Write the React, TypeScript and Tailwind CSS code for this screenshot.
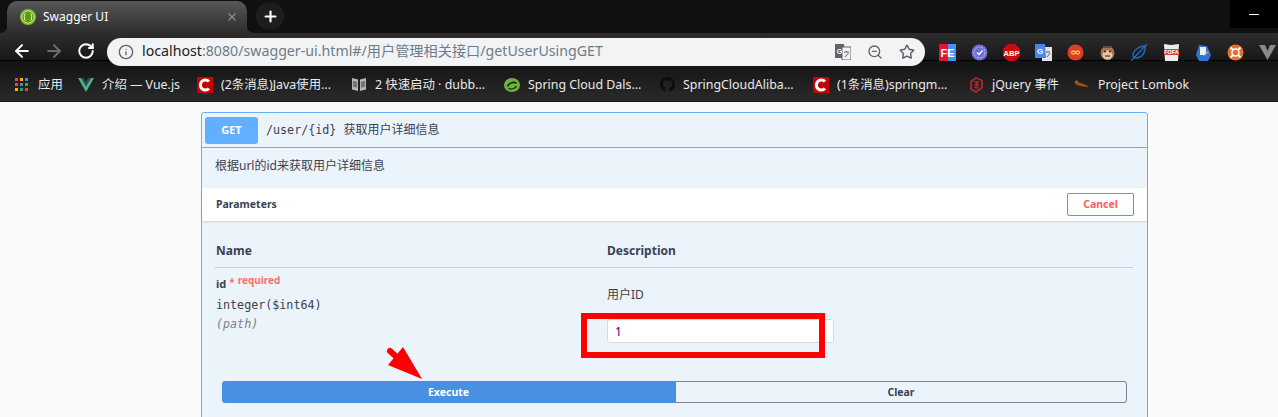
import React from 'react';
import { ArrowLeft, ArrowRight, RotateCw, Info, ZoomOut, Star, X, Plus } from 'lucide-react';

const CRed = () => (
  <span className="w-4 h-4 bg-[#c80000] flex items-center justify-center shrink-0">
    <svg width="14" height="14" viewBox="0 0 14 14"><path d="M11 3.600A5 5 0 1 0 11 10.400" fill="none" stroke="#fff" strokeWidth="3" /></svg>
  </span>
);

const AppsGrid = () => {
  const colors = ['#e8453c', '#f4b400', '#4285f4', '#e8453c', '#4285f4', '#34a853', '#f4b400', '#34a853', '#e8453c'];
  return (
    <span className="w-[15px] shrink-0">
      <span className="w-[13px] h-[13px] grid grid-cols-3 gap-[2px]">
        {colors.map((c, i) => <span key={i} className="w-[3px] h-[3px]" style={{ backgroundColor: c }} />)}
      </span>
    </span>
  );
};

const VueLogo = () => (
  <svg width="16" height="14" viewBox="0 0 16 14" className="shrink-0">
    <path d="M0 0h3.200L8 8.200 12.800 0H16L8 14z" fill="#41b883" />
    <path d="M3.200 0h2.600L8 3.800 10.200 0h2.600L8 8.200z" fill="#35495e" />
  </svg>
);

const BookIcon = () => (
  <svg width="16" height="15" viewBox="0 0 16 15" className="shrink-0">
    <path d="M1 1l6 1.500V14L1 12.500z" fill="#b5b5b5" />
    <path d="M15 1L9 2.500V14l6-1.500z" fill="#b5b5b5" />
    <path d="M3 4v6M5 4.500v6M11 4.500v6M13 4v6" stroke="#333" strokeWidth="1" />
  </svg>
);

const SpringIcon = () => (
  <svg width="16" height="14" viewBox="0 0 16 14" className="shrink-0">
    <ellipse cx="8" cy="7" rx="8" ry="7" fill="#6db33f" />
    <path d="M3.500 8.500C5 5 9 3.500 12.500 5" fill="none" stroke="#1d1d1d" strokeWidth="1.600" />
    <path d="M4.500 10.500c3 1 6 .5 8-2.500" fill="none" stroke="#1d1d1d" strokeWidth="1.200" />
  </svg>
);

const GithubIcon = () => (
  <svg width="15" height="15" viewBox="0 0 16 16" className="shrink-0">
    <path fill="#0c0c0c" d="M8 0C3.580 0 0 3.580 0 8c0 3.540 2.290 6.530 5.470 7.590.4.070.55-.17.55-.38 0-.19-.01-.82-.01-1.490-2.010.37-2.530-.49-2.690-.94-.09-.23-.48-.94-.82-1.130-.28-.15-.68-.52-.01-.53.63-.01 1.080.58 1.230.82.72 1.210 1.870.87 2.330.66.070-.52.28-.87.51-1.070-1.780-.2-3.640-.89-3.640-3.950 0-.87.310-1.590.820-2.150-.08-.2-.36-1.020.08-2.120 0 0 .67-.21 2.200.82a7.600 7.600 0 0 1 4 0c1.530-1.040 2.200-.82 2.200-.82.44 1.100.16 1.920.08 2.120.51.560.82 1.270.82 2.150 0 3.070-1.870 3.750-3.650 3.950.29.250.54.730.54 1.480 0 1.070-.01 1.930-.01 2.200 0 .21.150.46.550.38A8.010 8.010 0 0 0 16 8c0-4.420-3.580-8-8-8z" />
  </svg>
);

const JQueryIcon = () => (
  <svg width="16" height="16" viewBox="0 0 16 16" className="shrink-0">
    <path d="M8 1l6 2.500v7L8 15l-5-3V4.500L8 1z" fill="none" stroke="#b3262a" strokeWidth="1.800" />
    <path d="M6 5h4L7.500 8H10l-1 3-3-1" fill="none" stroke="#b3262a" strokeWidth="1.500" />
  </svg>
);

const ChiliIcon = () => (
  <svg width="16" height="10" viewBox="0 0 16 10" className="shrink-0">
    <path d="M1 2c1-1 2-1 3 0 3 1 7 2 11 5-4 0-9-1-12-2-1 0-2-1-2-3z" fill="#b4441c" />
    <path d="M0 2l3-2 1 2z" fill="#6a7d2a" />
  </svg>
);

const bookmarks: { icon: React.ReactNode; label: string; width: string }[] = [
  { icon: <AppsGrid />, label: '应用', width: 'w-[63px]' },
  { icon: <VueLogo />, label: '介绍 — Vue.js', width: 'w-[119px]' },
  { icon: <CRed />, label: '(2条消息)Java使用...', width: 'w-[154px]' },
  { icon: <BookIcon />, label: '2 快速启动 · dubb...', width: 'w-[153px]' },
  { icon: <SpringIcon />, label: 'Spring Cloud Dals...', width: 'w-[156px]' },
  { icon: <GithubIcon />, label: 'SpringCloudAliba...', width: 'w-[153px]' },
  { icon: <CRed />, label: '(1条消息)springm...', width: 'w-[155px]' },
  { icon: <JQueryIcon />, label: 'jQuery 事件', width: 'w-[106px]' },
  { icon: <ChiliIcon />, label: 'Project Lombok', width: 'w-[130px]' },
];

const extensions: React.ReactNode[] = [
  <svg key="fe" width="17" height="17" viewBox="0 0 17 17"><rect width="9" height="17" fill="#e8112d" /><rect x="9" width="8" height="17" fill="#4a90f0" /><text x="1.500" y="13" fontSize="11" fontWeight="700" fill="#fff" fontFamily="Liberation Sans">FE</text></svg>,
  <svg key="check" width="17" height="17" viewBox="0 0 17 17"><circle cx="8.500" cy="8.500" r="8" fill="#6a6fd0" /><circle cx="8.500" cy="8.500" r="5.500" fill="none" stroke="#c9cbf2" strokeDasharray="2 1" /><path d="M6 8.500l2 2 3.500-4" fill="none" stroke="#fff" strokeWidth="1.400" /></svg>,
  <svg key="abp" width="17" height="17" viewBox="0 0 17 17"><path d="M5 0h7l5 5v7l-5 5H5l-5-5V5z" fill="#c70d0d" /><text x="8.500" y="11.500" fontSize="7.500" fontWeight="700" textAnchor="middle" fill="#fff" fontFamily="Liberation Sans">ABP</text></svg>,
  <svg key="gt" width="17" height="17" viewBox="0 0 17 17"><rect x="7" y="3" width="10" height="14" fill="#e3e3e3" /><path d="M0 0h10l1 14H0z" fill="#4a86e8" /><text x="5" y="10" fontSize="8" fontWeight="700" textAnchor="middle" fill="#fff" fontFamily="Liberation Sans">G</text><path d="M11 8h4M13 7v1M12 13l3-4" stroke="#666" strokeWidth="1" fill="none" /></svg>,
  <svg key="inf" width="17" height="17" viewBox="0 0 17 17"><circle cx="8.500" cy="8.500" r="8" fill="#d9402c" /><path d="M8.500 8.500c-1-2-4-2-4 0s3 2 4 0 4-2 4 0-3 2-4 0z" fill="none" stroke="#f4c430" strokeWidth="1.300" /></svg>,
  <svg key="monkey" width="15" height="17" viewBox="0 0 15 17"><circle cx="7.500" cy="9" r="7" fill="#a9734f" /><ellipse cx="7.500" cy="11" rx="5" ry="4.500" fill="#e6c3a3" /><circle cx="5" cy="7.500" r="1" fill="#222" /><circle cx="10" cy="7.500" r="1" fill="#222" /><path d="M5 12h5" stroke="#222" /><path d="M3 2h9v2H3z" fill="#6b4a33" /></svg>,
  <svg key="leaf" width="17" height="17" viewBox="0 0 17 17" fill="none" stroke="#1c6cc4" strokeWidth="1.300"><path d="M2 12C2 6 8 2 14 2c1 6-3 12-9 12-1 0-2-1-3-2z" /><path d="M0 17L16 0" /></svg>,
  <svg key="cup" width="15" height="17" viewBox="0 0 15 17"><path d="M0 0l7 1 8-1-1 17H1z" fill="#ececec" /><rect x="0" y="5" width="15" height="6" fill="#d93a3a" /><text x="7.500" y="10" fontSize="5.500" fontWeight="700" textAnchor="middle" fill="#fff" fontFamily="Liberation Sans">FOFA</text></svg>,
  <svg key="doc" width="15" height="17" viewBox="0 0 15 17"><path d="M3 1l8 1 4 9-3 6H3L0 11z" fill="#2f74d0" /><path d="M4 3h6v8H4z" fill="#e8f1fb" /><path d="M7 12l5-5 1 1-5 4z" fill="#e8a020" /></svg>,
  <svg key="ring" width="17" height="17" viewBox="0 0 17 17"><circle cx="8.500" cy="8.500" r="8" fill="#e8712a" /><circle cx="8.500" cy="8.500" r="3.500" fill="none" stroke="#fff" strokeWidth="1.500" /><path d="M3.500 3.500l2.500 2.500M13.500 3.500L11 6M3.500 13.500L6 11M13.500 13.500L11 11" stroke="#fff" strokeWidth="1.800" /></svg>,
  <svg key="v" width="17" height="15" viewBox="0 0 17 15"><path d="M0 0h6l2.500 6L11 0h6l-8.500 15z" fill="#8a8a8a" /></svg>,
];

export default function App() {
  return (
    <div className="h-[417px] overflow-hidden bg-[#fafafa] font-['Noto_Sans','Noto_Sans_CJK_SC',sans-serif] relative">
      {/* Tab strip */}
      <div className="h-[33px] bg-[#101010] flex items-end relative">
        <div className="ml-[7px] w-[240px] h-[32px] rounded-t-[10px] bg-gradient-to-b from-[#585858] to-[#2d2d2d] flex items-center pl-[13px] pr-[9px] relative">
          <svg width="7" height="7" viewBox="0 0 7 7" className="absolute left-[-7px] bottom-0"><path d="M7 0v7H0c4 0 7-3 7-7z" fill="#2d2d2d" /></svg>
          <svg width="7" height="7" viewBox="0 0 7 7" className="absolute right-[-7px] bottom-0"><path d="M0 0v7h7C3 7 0 4 0 0z" fill="#2d2d2d" /></svg>
          <svg width="16" height="16" viewBox="0 0 16 16" className="shrink-0">
            <circle cx="8" cy="8" r="8" fill="#85bf1f" />
            <circle cx="8" cy="8" r="6" fill="#5c9a10" stroke="#fff" strokeWidth="0.600" />
            <path d="M5.500 4.500c-1.500 0-.5 3.500-1.500 3.500 1 0 0 3.500 1.500 3.500M10.500 4.500c1.500 0 .5 3.500 1.500 3.500-1 0 0 3.500-1.500 3.500" fill="none" stroke="#fff" strokeWidth="0.900" />
          </svg>
          <span className="ml-[7px] text-[12px] text-white">Swagger UI</span>
          <X size={12} strokeWidth={2.500} className="ml-auto text-[#8d8d8d]" />
        </div>
        <div className="ml-[9px] mb-[3px] w-[28px] h-[28px] rounded-full bg-[#1d1d1d] flex items-center justify-center">
          <Plus size={17} strokeWidth={3} className="text-white" />
        </div>
        <div className="absolute right-0 top-0 w-[48px] h-[28px] bg-black flex items-center justify-center">
          <span className="w-[10px] h-[1px] bg-white" />
        </div>
      </div>

      {/* Toolbar */}
      <div className="h-[28px] bg-gradient-to-b from-[#2d2d2d] to-[#181818] border-b border-black flex items-start relative">
        <div className="w-[107px] shrink-0 h-[28px] mt-[4px] pl-[12px] flex items-center">
          <ArrowLeft size={20} strokeWidth={2.400} className="text-white" />
          <ArrowRight size={20} strokeWidth={2.400} className="text-[#6e6e6e] ml-[12px]" />
          <RotateCw size={18} strokeWidth={2.600} className="text-white ml-[13px]" />
        </div>
        <div className="mt-[5px] w-[818px] shrink-0 h-[28px] rounded-full bg-[#f1f3f4] flex items-center pl-[11px] pr-[10px] relative z-10">
          <Info size={16} strokeWidth={2} className="text-[#5f6368] shrink-0" />
          <span className="ml-[8px] pb-[2px] text-[14.200px] text-[#6f7c88] whitespace-nowrap"><span className="text-[#202124]">localhost</span>:8080/swagger-ui.html#/用户管理相关接口/getUserUsingGET</span>
          <div className="ml-auto flex items-center gap-[16px] text-[#5f6368]">
            <svg width="16" height="16" viewBox="0 0 16 16"><path d="M0 0h9l1 14H0z" fill="#5f6368" /><rect x="7" y="3" width="9" height="13" fill="#f1f3f4" stroke="#5f6368" /><text x="4.500" y="9.500" fontSize="7" fontWeight="700" textAnchor="middle" fill="#fff" fontFamily="Liberation Sans">G</text><path d="M9 8h5M11.500 7v1M10 13l3.500-4" stroke="#5f6368" fill="none" /></svg>
            <ZoomOut size={16} strokeWidth={2} />
            <Star size={16} strokeWidth={2.200} />
          </div>
        </div>
        <div className="ml-[6px] shrink-0 flex items-center h-[28px] pt-[10px]">
          {extensions.map((icon, i) => (
            <span key={i} className="w-[32px] h-[18px] flex items-center justify-center">{icon}</span>
          ))}
        </div>
      </div>

      {/* Bookmarks */}
      <div className="h-[41px] bg-gradient-to-b from-[#131313] to-[#2a2a2a] border-b border-[#1a1a1a] flex items-center pl-[15px] pt-[8px]">
        {bookmarks.map((b, i) => (
          <div key={i} className={`${b.width} shrink-0 flex items-center gap-[8px]`}>
            {b.icon}
            <span className="text-[12.400px] text-[#e8eaed] whitespace-nowrap">{b.label}</span>
          </div>
        ))}
      </div>

      {/* Swagger opblock */}
      <div className="ml-[201px] mt-[10px] w-[947px] border border-[#61affe] rounded-t-[3px] bg-[#ebf3fb] text-[#3b4151]">
        <div className="h-[35px] border-b border-[#61affe] flex items-center pl-[3px]">
          <span className="w-[53px] h-[27px] rounded-[3px] bg-[#61affe] text-white text-[11px] font-bold flex items-center justify-center">GET</span>
          <span className="ml-[8px] font-['DejaVu_Sans_Mono','Noto_Sans_CJK_SC',monospace] text-[11.700px] whitespace-pre">/user/{'{id}'} <span className="font-['Noto_Sans','Noto_Sans_CJK_SC',sans-serif] text-[12px]">获取用户详细信息</span></span>
        </div>
        <div className="h-[40px] pl-[13px] pb-[4px] flex items-center text-[12px]">根据url的id来获取用户详细信息</div>
        <div className="h-[33px] bg-white shadow-[0_1px_2px_rgba(0,0,0,0.15)] pl-[14px] pr-[13px] flex items-center justify-between">
          <span className="text-[10.500px] font-bold pt-[1px]">Parameters</span>
          <button className="w-[67px] h-[23px] rounded-[2px] border border-[#ff6060] text-[#ff6060] text-[10.500px] font-bold bg-white">Cancel</button>
        </div>
        <div className="pl-[13px] pr-[14px]">
          <div className="h-[47px] pl-[1px] border-b border-[#c5cdda] flex items-end pb-[7px] text-[12px] font-bold">
            <span className="w-[391px]">Name</span>
            <span>Description</span>
          </div>
          <div className="flex h-[113px]">
            <div className="w-[392px] pl-[1px] pt-[4px]">
              <div className="flex items-start h-[20px]">
                <span className="text-[11px] font-bold mt-[4px]">id</span>
                <span className="text-[10px] text-[#ff6f6f] font-bold ml-[3px] mt-[3px]">*</span>
                <span className="text-[10px] text-[#ff6f6f] font-bold ml-[3px] mt-[1px]">required</span>
              </div>
              <div className="font-['DejaVu_Sans_Mono',monospace] text-[11.700px] mt-[5px]">integer($int64)</div>
              <div className="font-['DejaVu_Sans_Mono',monospace] text-[11.700px] italic text-[#7c7f88] mt-[1px]">(path)</div>
            </div>
            <div className="pt-[18px]">
              <div className="text-[12px] h-[17px] leading-[17px]">用户ID</div>
              <input readOnly value="1" className="mt-[16px] w-[227px] h-[24px] rounded-[3px] border border-[#d9d9d9] bg-white pl-[7px] text-[12px] text-[#3b0088] outline-none block" />
            </div>
          </div>
          <div className="ml-[7px] w-[905px] h-[22px] flex text-[10.500px] font-bold">
            <button className="w-[453px] rounded-l-[3px] bg-[#4990e2] text-white pt-[1px]">Execute</button>
            <button className="flex-1 rounded-r-[3px] border border-[#7d8293] text-[#3b4151] pt-[1px]">Clear</button>
          </div>
        </div>
        <div className="h-[20px]" />
      </div>

      {/* Annotations drawn over the screenshot */}
      <div className="absolute left-[581px] top-[313px] w-[244px] h-[45px] border-[6px] border-[#ff0000] pointer-events-none" />
      <svg width="44" height="40" viewBox="0 0 44 40" className="absolute left-[383px] top-[344px] pointer-events-none">
        <path d="M7 7L19 18" stroke="#ff0000" strokeWidth="6" strokeLinecap="round" />
        <path d="M20 3L5 21L39 35z" fill="#ff0000" />
      </svg>
    </div>
  );
}
